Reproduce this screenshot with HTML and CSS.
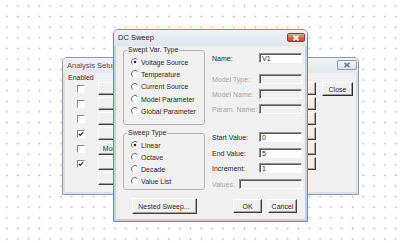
FILE: index.html
```html
<!DOCTYPE html>
<html>
<head>
<meta charset="utf-8">
<title>DC Sweep</title>
<link rel="stylesheet" href="styles.css">
</head>
<body>
<div class="desk">
  <section class="win setup">
    <header class="titlebar">
      <span class="title">Analysis Setup</span>
      <span class="xbtn xgray"><svg width="8" height="6" viewBox="0 0 8 6"><path d="M1.5 0.8 6.5 5.2M6.5 0.8 1.5 5.2" stroke="#6f7d8e" stroke-width="1.6" fill="none"/></svg></span>
    </header>
    <div class="client setup-client">
      <div class="acol acol-left">
        <div class="hdr">Enabled</div>
        <div class="arow"><span class="chk"></span><button class="btn abtn"></button></div>
        <div class="arow"><span class="chk"></span><button class="btn abtn"></button></div>
        <div class="arow"><span class="chk"></span><button class="btn abtn"></button></div>
        <div class="arow"><span class="chk"><svg width="6" height="6" viewBox="0 0 6 6"><path d="M0.8 2.8 2.3 4.4 5.2 1.2" fill="none" stroke="#222" stroke-width="1.2"/></svg></span><button class="btn abtn"></button></div>
        <div class="arow"><span class="chk"></span><button class="btn abtn">Monte Carlo/Worst Case...</button></div>
        <div class="arow"><span class="chk"><svg width="6" height="6" viewBox="0 0 6 6"><path d="M0.8 2.8 2.3 4.4 5.2 1.2" fill="none" stroke="#222" stroke-width="1.2"/></svg></span><button class="btn abtn"></button></div>
        <div class="arow"><span class="nochk"></span><button class="btn abtn"></button></div>
      </div>
      <div class="acol acol-right">
        <div class="hdr"></div>
        <div class="arow"><span class="nochk"></span><button class="btn abtn"></button></div>
        <div class="arow"><span class="chk"></span><button class="btn abtn"></button></div>
        <div class="arow"><span class="chk"></span><button class="btn abtn"></button></div>
        <div class="arow"><span class="chk"></span><button class="btn abtn"></button></div>
        <div class="arow"><span class="chk"></span><button class="btn abtn"></button></div>
        <div class="arow"><span class="chk"></span><button class="btn abtn"></button></div>
      </div>
      <div class="closecol"><button class="btn closeb">Close</button></div>
    </div>
  </section>

  <section class="win dc">
    <header class="titlebar">
      <span class="title">DC Sweep</span>
      <span class="xbtn xred"><svg width="8" height="6" viewBox="0 0 8 6"><path d="M1.5 0.6 6.5 5.4M6.5 0.6 1.5 5.4" stroke="#fff" stroke-width="1.7" fill="none"/></svg></span>
    </header>
    <div class="client dc-client">
      <div class="lcol">
        <fieldset class="gb gb1">
          <legend>Swept Var. Type</legend>
          <div class="opt"><svg class="rd" width="8" height="8" viewBox="0 0 8 8"><circle cx="4" cy="4" r="3.5" fill="#fff"/><path d="M1.5 6.5A3.5 3.5 0 0 1 6.5 1.5" fill="none" stroke="#6e6e6e"/><circle cx="4" cy="4" r="1.3" fill="#222"/></svg><span>Voltage Source</span></div>
          <div class="opt"><svg class="rd" width="8" height="8" viewBox="0 0 8 8"><circle cx="4" cy="4" r="3.5" fill="#fff"/><path d="M1.5 6.5A3.5 3.5 0 0 1 6.5 1.5" fill="none" stroke="#6e6e6e"/></svg><span>Temperature</span></div>
          <div class="opt"><svg class="rd" width="8" height="8" viewBox="0 0 8 8"><circle cx="4" cy="4" r="3.5" fill="#fff"/><path d="M1.5 6.5A3.5 3.5 0 0 1 6.5 1.5" fill="none" stroke="#6e6e6e"/></svg><span>Current Source</span></div>
          <div class="opt"><svg class="rd" width="8" height="8" viewBox="0 0 8 8"><circle cx="4" cy="4" r="3.5" fill="#fff"/><path d="M1.5 6.5A3.5 3.5 0 0 1 6.5 1.5" fill="none" stroke="#6e6e6e"/></svg><span>Model Parameter</span></div>
          <div class="opt"><svg class="rd" width="8" height="8" viewBox="0 0 8 8"><circle cx="4" cy="4" r="3.5" fill="#fff"/><path d="M1.5 6.5A3.5 3.5 0 0 1 6.5 1.5" fill="none" stroke="#6e6e6e"/></svg><span>Global Parameter</span></div>
        </fieldset>
        <fieldset class="gb gb2">
          <legend>Sweep Type</legend>
          <div class="opt"><svg class="rd" width="8" height="8" viewBox="0 0 8 8"><circle cx="4" cy="4" r="3.5" fill="#fff"/><path d="M1.5 6.5A3.5 3.5 0 0 1 6.5 1.5" fill="none" stroke="#6e6e6e"/><circle cx="4" cy="4" r="1.3" fill="#222"/></svg><span>Linear</span></div>
          <div class="opt"><svg class="rd" width="8" height="8" viewBox="0 0 8 8"><circle cx="4" cy="4" r="3.5" fill="#fff"/><path d="M1.5 6.5A3.5 3.5 0 0 1 6.5 1.5" fill="none" stroke="#6e6e6e"/></svg><span>Octave</span></div>
          <div class="opt"><svg class="rd" width="8" height="8" viewBox="0 0 8 8"><circle cx="4" cy="4" r="3.5" fill="#fff"/><path d="M1.5 6.5A3.5 3.5 0 0 1 6.5 1.5" fill="none" stroke="#6e6e6e"/></svg><span>Decade</span></div>
          <div class="opt"><svg class="rd" width="8" height="8" viewBox="0 0 8 8"><circle cx="4" cy="4" r="3.5" fill="#fff"/><path d="M1.5 6.5A3.5 3.5 0 0 1 6.5 1.5" fill="none" stroke="#6e6e6e"/></svg><span>Value List</span></div>
        </fieldset>
        <button class="btn nested">Nested Sweep...</button>
      </div>
      <div class="rcol">
        <div class="frow r-name"><label>Name:</label><input class="tb" value="V1"></div>
        <div class="frow r-mtype dis"><label>Model Type:</label><input class="tb" disabled></div>
        <div class="frow r-gap5 dis"><label>Model Name:</label><input class="tb" disabled></div>
        <div class="frow r-gap5 dis"><label>Param. Name:</label><input class="tb" disabled></div>
        <div class="frow r-start"><label>Start Value:</label><input class="tb" value="0"></div>
        <div class="frow r-gap6"><label>End Value:</label><input class="tb" value="5"></div>
        <div class="frow r-gap5"><label>Increment:</label><input class="tb" value="1"></div>
        <div class="frow r-gap6 dis"><label>Values:</label><input class="tb wide" disabled></div>
        <div class="brow"><button class="btn okb">OK</button><button class="btn okb">Cancel</button></div>
      </div>
    </div>
  </section>
</div>
</body>
</html>
```
FILE: styles.css
```css
* { box-sizing: border-box; }
html, body { margin: 0; padding: 0; }
body {
  width: 400px;
  height: 243px;
  overflow: hidden;
  font-family: "Liberation Sans", Arial, sans-serif;
  font-size: 7px;
  color: #2a2a2a;
  background-color: #fff;
  background-image: radial-gradient(circle, #ababab 0, #ababab 0.55px, rgba(171,171,171,0) 1.15px);
  background-size: 10.8px 10.6px;
  background-position: 1.6px 0.7px;
}
.desk { position: relative; width: 400px; height: 243px; }

/* windows */
.win {
  position: absolute;
  display: flex;
  flex-direction: column;
  border: 1px solid #7d93ab;
  border-radius: 5px 5px 0 0;
  padding: 0 2px 2px;
}
.setup { left: 62px; top: 57px; width: 297px; height: 138px; background: #d8e0e9; border-color: #8d99a8; }
.dc { left: 113px; top: 29px; width: 195px; height: 193px; background: #bdd2e8; border-color: #6e8fb4; }

.titlebar {
  display: flex;
  justify-content: space-between;
  align-items: flex-start;
  margin: 0 -2px;
  padding-left: 4px;
  border-radius: 4px 4px 0 0;
}
.dc .titlebar { height: 16px; background: linear-gradient(#eef2f7, #dde6f0); }
.setup .titlebar { height: 15px; background: linear-gradient(#f1f3f6, #e3e8ee); }
.title { align-self: center; font-size: 7.5px; line-height: 8px; }
.dc .title { color: #14213a; }
.setup .title { color: #46546a; }

.xbtn { display: flex; align-items: center; justify-content: center; border-radius: 2px; }
.xred {
  width: 18px; height: 9px; margin: 3px 2px 0 0;
  border: 1px solid #93392a;
  background: linear-gradient(#eca595, #d66a55 50%, #c3452f);
}
.xgray {
  width: 20px; height: 10px; margin: 2px 1px 0 0;
  border: 1px solid #8d9bae;
  background: linear-gradient(#f4f6f9, #dbe2ea);
}

.client { flex: 1; background: #f0f0f0; }

/* classic controls */
.btn {
  font: inherit;
  color: #2a2a2a;
  background: #f0f0f0;
  border: 1px solid;
  border-color: #ffffff #404040 #404040 #ffffff;
  box-shadow: inset -1px -1px 0 #a0a0a0;
  padding: 0;
  margin: 0;
  line-height: 1;
  white-space: nowrap;
  overflow: hidden;
}
.chk {
  display: flex;
  width: 8px; height: 8px;
  background: #fff;
  border: 1px solid;
  border-color: #8a8a8a #ffffff #ffffff #8a8a8a;
}
.nochk { width: 8px; height: 8px; }
.tb {
  font: inherit;
  color: #2a2a2a;
  width: 43px; height: 10px;
  margin: 0;
  padding: 0 0 0 2px;
  background: #fff;
  border: 1px solid;
  border-color: #8e8e8e #ffffff #ffffff #8e8e8e;
  box-shadow: inset 1px 1px 0 #5a5a5a;
  outline: none;
}
.tb:disabled { background: #f0f0f0; }
.tb.wide { width: 63px; }

/* analysis setup client */
.setup-client { display: flex; padding: 1px 3px 0; }
.acol { display: flex; flex-direction: column; }
.acol-left { width: 122px; }
.acol-right { width: 119px; margin-left: 7px; }
.hdr { height: 7px; line-height: 7px; }
.arow { display: flex; align-items: center; height: 15px; }
.acol-left .arow .chk, .acol-left .arow .nochk { margin-left: 9px; margin-right: 13px; }
.acol-right .arow .chk, .acol-right .arow .nochk { margin-left: 3px; margin-right: 7px; }
.abtn { height: 13px; flex: 1; }
.closecol { width: 31px; margin-left: 6px; }
.closeb { width: 31px; height: 14px; margin-top: 8px; border-color: #ffffff #2a2a2a #2a2a2a #ffffff; }

/* dc sweep client */
.dc-client { display: flex; gap: 7px; padding: 0 3px 0 7px; }
.lcol { width: 82px; display: flex; flex-direction: column; }
.gb {
  margin: 0;
  min-width: 0;
  border: 1px solid #b0b3b7;
  border-radius: 3px;
  padding: 2px 0 6.6px 3px;
}
.gb legend { padding: 0 1px; margin: 0; line-height: 8px; font-size: 7px; }
.gb2 { margin-top: 4px; padding-bottom: 2px; }
.opt { display: flex; align-items: center; gap: 2px; height: 12.3px; margin-left: 4px; white-space: nowrap; }
.gb2 .opt { height: 12px; }
.rd { flex: none; display: block; }
.nested { width: 65px; height: 16px; margin-top: 8px; align-self: center; }

.rcol { width: 90px; display: flex; flex-direction: column; }
.frow { display: flex; align-items: center; height: 10px; }
.frow label { flex: 1; white-space: nowrap; }
.frow.dis label { color: #a6a6a6; }
.r-name { margin-top: 7px; }
.r-mtype { margin-top: 11px; }
.r-gap5 { margin-top: 5px; }
.r-gap6 { margin-top: 6px; }
.r-start { margin-top: 18px; }
.brow { display: flex; justify-content: flex-end; gap: 6px; padding-right: 5px; margin-top: 10px; }
.okb { width: 29px; height: 14px; }
```
